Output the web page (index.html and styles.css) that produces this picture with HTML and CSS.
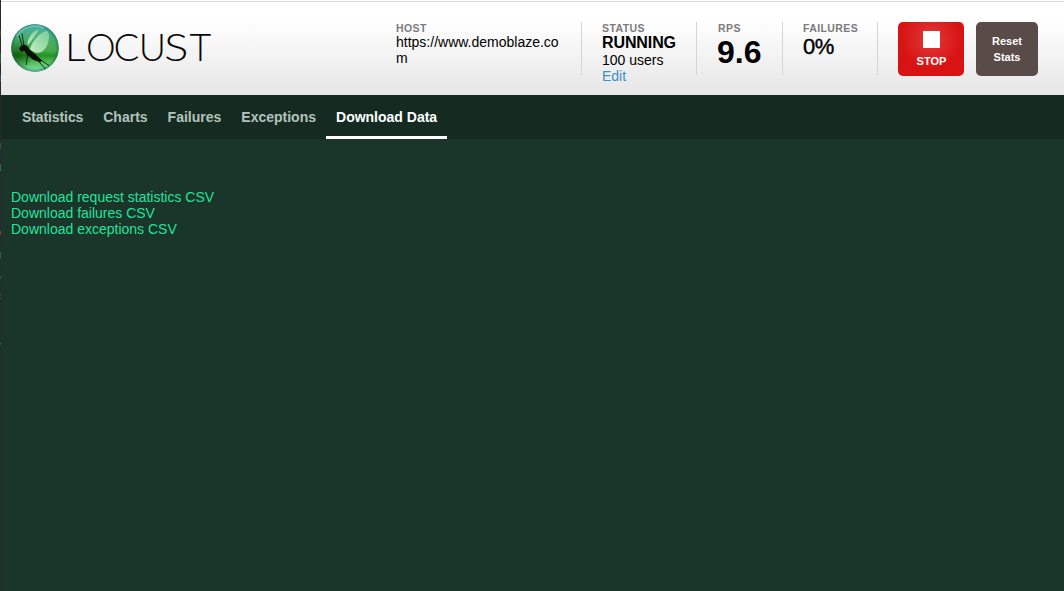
FILE: index.html
```html
<!DOCTYPE html>
<html lang="en">
<head>
<meta charset="utf-8">
<title>Locust</title>
<link rel="stylesheet" href="styles.css">
</head>
<body>
<div class="window-edge"></div>
<div class="app">
  <header class="top">
    <svg class="logo" width="208" height="52" viewBox="0 0 208 52" role="img" aria-label="Locust">
      <defs>
        <linearGradient id="ball" x1="0" y1="0" x2="0" y2="1">
          <stop offset="0" stop-color="#49b3aa"/>
          <stop offset=".3" stop-color="#48ac70"/>
          <stop offset=".55" stop-color="#48aa4b"/>
          <stop offset=".66" stop-color="#259225"/>
          <stop offset=".8" stop-color="#55bd57"/>
          <stop offset="1" stop-color="#7be0ae"/>
        </linearGradient>
        <radialGradient id="rim">
          <stop offset=".86" stop-color="#086149" stop-opacity="0"/>
          <stop offset=".97" stop-color="#086149" stop-opacity=".4"/>
          <stop offset="1" stop-color="#064d40" stop-opacity=".7"/>
        </radialGradient>
        <radialGradient id="shade" cx=".12" cy=".64" r=".36">
          <stop offset="0" stop-color="#003900" stop-opacity=".6"/>
          <stop offset="1" stop-color="#003900" stop-opacity="0"/>
        </radialGradient>
        <linearGradient id="wing" x1="1" y1="0" x2="0" y2="1">
          <stop offset="0" stop-color="#8edba0" stop-opacity=".7"/>
          <stop offset="1" stop-color="#dcfbdd" stop-opacity=".85"/>
        </linearGradient>
      </defs>
      <circle cx="28" cy="26" r="23.7" fill="url(#ball)"/>
      <circle cx="28" cy="26" r="23.7" fill="url(#shade)"/>
      <circle cx="28" cy="26" r="23.7" fill="url(#rim)"/>
      <path d="M9.5 14Q17 4 28 4Q33 4 37 6" fill="none" stroke="#a5e9ee" stroke-opacity=".5" stroke-width="1.4"/>
      <path d="M20.5 23C20 18 25 9 31 7.500C32.500 9 26 17 20.500 23Z" fill="url(#wing)"/>
      <path d="M23 27C25 19 34 9 40 9C44 12 42 24 36 29C32 32 26 31 23 27Z" fill="url(#wing)"/>
      <path d="M12.500 26.500L14 24L18 23L21 25L22 27.500L29 33L34.500 38.500L33.500 40L26 37.500L20 32.500L17.500 28.500L14 29.500Z" fill="#061006" stroke="#061006" stroke-width=".5"/>
      <path d="M15.500 24L12 13.500M17 24L15 11.500M18 28L20.500 33L20 38L19 43M28 34L34 38L42 43.500M27 35L34 42L38.500 47" fill="none" stroke="#061006" stroke-width=".8"/>
      <g class="logo-text">
        <text transform="translate(57.900 39.300) scale(1.08 1)">L</text>
        <text transform="translate(79 39.300)">O</text>
        <text transform="translate(106.500 39.300) scale(1.02 1)">C</text>
        <text transform="translate(131.700 39.300)">U</text>
        <text transform="translate(157 39.300) scale(1.22 1)">S</text>
        <text transform="translate(182.500 39.300)">T</text>
      </g>
    </svg>
    <div class="boxes">
      <section class="box host"><div class="label">HOST</div><div class="host-value">https://www.demoblaze.com</div></section>
      <section class="box status"><div class="label">STATUS</div><div class="running">RUNNING</div><div>100 users</div><a class="edit" href="#">Edit</a></section>
      <section class="box rps"><div class="label">RPS</div><div class="rps-value">9.6</div></section>
      <section class="box fail"><div class="label">FAILURES</div><div class="fail-value">0%</div></section>
      <a class="button stop" href="#"><span class="square"></span>STOP</a>
      <a class="button reset" href="#">Reset<br>Stats</a>
    </div>
  </header>
  <nav class="tabs">
    <a class="first" href="#">Statistics</a><a href="#">Charts</a><a href="#">Failures</a><a href="#">Exceptions</a><a class="current" href="#">Download Data</a>
  </nav>
  <main class="downloads">
    <a href="#">Download request statistics CSV</a>
    <a href="#">Download failures CSV</a>
    <a href="#">Download exceptions CSV</a>
  </main>
</div>
</body>
</html>
```
FILE: styles.css
```css
* { box-sizing: border-box; }
body {
  margin: 0;
  display: flex;
  height: 591px;
  overflow: hidden;
  background: #1a3529;
  font: 14px/16px "Liberation Sans", Arial, sans-serif;
  color: #000;
}
a { text-decoration: none; }
.window-edge {
  width: 1px;
  background: linear-gradient(#2a282b 0 30px, #30434c 30px 36px, #2a282b 36px 53px, #355640 53px 63px, #2a282b 63px 75px, #304b68 75px 82px, #2a282b 82px 143px, #48502b 143px 149px, #2a282b 149px 164px, #3c614d 164px 171px, #2a282b 171px 231px, #70482c 231px 235px, #2a282b 235px 252px, #36534e 252px 259px, #2a282b 259px 276px, #31504d 276px 279px, #2a282b 279px 294px, #6c5858 294px 295px, #2a282b 295px 298px, #6c5858 298px 299px, #2a282b 299px 342px, #31504d 342px 345px, #2a282b 345px);
}
.app { flex: 1; }
.top {
  height: 95px;
  display: flex;
  justify-content: space-between;
  padding: 22px 26px 0 6px;
  background: linear-gradient(#d8d8d8, #d8d8d8) 0 1px / 100% 1px no-repeat, linear-gradient(#fff 20%, #e6e6e6);
}
.logo { display: block; }
.logo-text { font: 300 37.5px Lato, sans-serif; fill: #080808; }
.boxes { display: flex; }
.box {
  height: 53px;
  margin-right: 20px;
  border-right: 1px solid #d5d5d5;
}
.label {
  height: 12px;
  font-size: 10.5px;
  line-height: 12px;
  font-weight: bold;
  letter-spacing: .4px;
  color: #7b7b7b;
}
.host { width: 186px; padding-right: 20px; }
.host-value { word-break: break-all; }
.status { width: 95px; }
.running { font-size: 16px; line-height: 18px; font-weight: bold; letter-spacing: -.1px; }
.edit { color: #3d8fc6; }
.rps { width: 66px; padding-left: 1px; }
.rps-value { margin-left: -1px; font-size: 32px; line-height: 36px; font-weight: bold; }
.fail { width: 75px; }
.fail-value { font-size: 22px; line-height: 26px; letter-spacing: -.5px; -webkit-text-stroke: .4px #000; }
.button {
  height: 54px;
  border-radius: 5px;
  color: #fff;
  font-size: 11px;
  font-weight: bold;
  text-align: center;
}
.stop {
  width: 66px;
  margin-right: 12px;
  padding: 9px 0 0 1px;
  background: radial-gradient(circle at 33px 17px, #e13a3a, #d81313 30px);
}
.square { display: block; width: 17px; height: 17px; margin: 0 auto 5px; background: #fff; }
.reset { width: 62px; padding-top: 11px; background: #584b48; }
.tabs {
  display: flex;
  height: 44px;
  padding-left: 11px;
  background: #152b22;
}
.tabs a {
  height: 44px;
  padding: 14px 10px 0;
  border-bottom: 3px solid transparent;
  color: #b3c3bc;
  font-weight: bold;
}
.tabs .first { letter-spacing: -.1px; }
.tabs .current { color: #fff; border-color: #fff; }
.downloads {
  display: flex;
  flex-direction: column;
  align-items: flex-start;
  padding: 50px 10px;
}
.downloads a { color: #25e29c; }
```
